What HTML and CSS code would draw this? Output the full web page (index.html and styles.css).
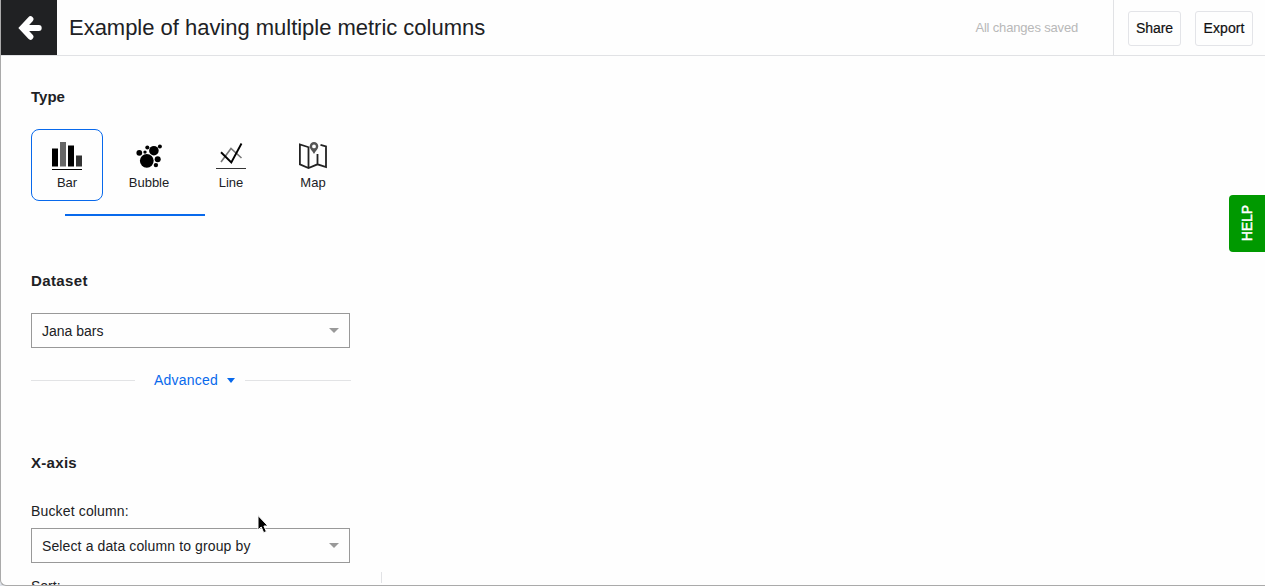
FILE: index.html
```html
<!DOCTYPE html>
<html lang="en">
<head>
<meta charset="utf-8">
<title>Chart editor</title>
<link rel="stylesheet" href="styles.css">
</head>
<body>
<div class="window">
  <header class="topbar">
    <button class="back" aria-label="Back">
      <svg width="24" height="26" viewBox="0 0 24 26" fill="none" stroke="#fff" stroke-width="5.800" stroke-linecap="round" stroke-linejoin="miter"><path d="M12.500 4.200L4.300 13L12.500 21.800"/><path d="M6 13H20.800"/></svg>
    </button>
    <h1 class="title">Example of having multiple metric columns</h1>
    <span class="status">All changes saved</span>
    <div class="actions">
      <button class="action share">Share</button>
      <button class="action export">Export</button>
    </div>
  </header>
  <main class="panel">
    <section class="type">
      <h2 class="heading">Type</h2>
      <div class="types">
        <button class="tile selected">
          <svg class="icon" width="30" height="30" viewBox="0 0 30 30"><path fill="#000" d="M0 6.500h6v18H0zM16 3.500h6v21h-6zM0 27h30v1H0z"/><path fill="#666" d="M8 0h6v24.500H8z"/><path fill="#333" d="M24 13.500h6v11h-6z"/></svg>
          <span>Bar</span>
        </button>
        <button class="tile">
          <svg class="icon" width="30" height="30" viewBox="0 0 30 30"><circle cx="12.800" cy="18.800" r="6.900"/><circle cx="19.900" cy="8.700" r="4.800"/><circle cx="5.300" cy="10.800" r="2.900"/><circle cx="13.300" cy="5.400" r="2"/><circle cx="11" cy="10.100" r="1.700"/><circle cx="25.900" cy="4.400" r="2"/><circle cx="23.700" cy="17.200" r="3"/><circle cx="21.900" cy="23.100" r="2.200"/></svg>
          <span>Bubble</span>
        </button>
        <button class="tile">
          <svg class="icon" width="30" height="30" viewBox="0 0 30 30" fill="none"><path stroke="#777" stroke-width="1.600" d="M5 20L15 6.500L25.500 16"/><path stroke="#000" stroke-width="1.900" d="M5 10.300L15.300 20.500L25.500 1.500"/><path stroke="#333" d="M0 26.500H30"/></svg>
          <span>Line</span>
        </button>
        <button class="tile">
          <svg class="icon" width="30" height="30" viewBox="0 0 30 30" fill="none"><path stroke="#222" stroke-width="1.800" d="M11.500 5.500L1.900 2.500V22.300L10.500 26L19.500 22.300L28 25V4.500L22.500 2.800M10.500 5.500V26M19.500 12V22.300"/><path fill="#555" fill-rule="evenodd" d="M16 0a4.300 4.300 0 0 1 4.300 4.300c0 2.700-2.600 4.500-4.300 7.700c-1.700-3.200-4.300-5-4.300-7.700A4.300 4.300 0 0 1 16 0zm0 2.500a1.900 1.900 0 1 0 0 3.800a1.900 1.900 0 0 0 0-3.800z"/></svg>
          <span>Map</span>
        </button>
      </div>
      <div class="scroll-thumb"></div>
    </section>
    <section class="dataset">
      <h2 class="heading">Dataset</h2>
      <div class="select"><span>Jana bars</span><i class="caret"></i></div>
      <div class="advanced"><span class="advanced-label">Advanced</span><i class="caret small"></i></div>
    </section>
    <section class="axis">
      <h2 class="heading">X-axis</h2>
      <label class="label bucket"><span>Bucket column:</span></label>
      <div class="select"><span class="choice">Select a data column to group by</span><i class="caret"></i></div>
      <label class="label sort"><span>Sort:</span></label>
    </section>
  </main>
  <div class="divider-end"></div>
  <aside class="help"><span>HELP</span></aside>
  <svg class="pointer" width="14" height="20" viewBox="0 0 14 20"><path fill="#000" stroke="#fff" d="M2 0.500V15L5.200 12L7.700 17.700L10.400 16.500L7.900 11H12Z"/></svg>
</div>
</body>
</html>
```
FILE: styles.css
```css
* { box-sizing: border-box; }
html { background: #dfe3ea; }
body { margin: 0; font-family: "Liberation Sans", Arial, sans-serif; font-size: 14px; color: #202124; }
button { font: inherit; color: inherit; padding: 0; background: none; border: 0; }
h1, h2 { margin: 0; }
svg { display: block; }
.window { position: relative; height: 586px; overflow: hidden; background: #fefefe; border: solid #aaa; border-width: 0 0 1px 1px; border-bottom-left-radius: 6px; }
.topbar { display: flex; height: 56px; border-bottom: 1px solid #e1e2e5; }
.back { display: flex; align-items: center; width: 56px; height: 55px; padding-left: 17px; background: #202123; }
.title { margin-left: 12px; font-size: 22px; font-weight: 400; line-height: 55px; letter-spacing: -0.02px; white-space: nowrap; }
.status { margin-left: auto; margin-right: 35px; font-size: 13px; line-height: 55px; letter-spacing: -0.17px; color: #b8b8b8; }
.actions { display: flex; align-items: center; gap: 14px; width: 152px; padding-left: 14px; padding-top: 1px; border-left: 1px solid #e1e2e5; }
.action { height: 35px; border: 1px solid #e3e4e8; border-radius: 3px; color: #111; -webkit-text-stroke: 0.2px #111; }
.share { width: 53px; letter-spacing: -0.1px; }
.export { width: 58px; letter-spacing: 0.1px; }
.panel { width: 350px; padding-left: 30px; }
.heading { font-size: 15px; line-height: 18px; font-weight: 700; }
.dataset .heading { letter-spacing: 0.38px; }
.axis .heading { letter-spacing: 0.3px; }
.type { height: 216px; padding-top: 32px; }
.types { display: flex; gap: 10px; margin-top: 23px; }
.tile { display: flex; flex-direction: column; align-items: center; flex: none; width: 72px; height: 72px; padding-top: 12px; border: 1px solid transparent; border-radius: 8px; font-size: 13px; line-height: 16px; }
.tile span { margin-top: 3px; }
.selected { border-color: #0869ec; }
.scroll-thumb { width: 140px; height: 2px; margin: 13px 0 0 34px; background: #0869ec; }
.dataset { height: 182px; }
.select { display: flex; align-items: center; justify-content: space-between; width: 319px; height: 35px; padding: 0 10px; border: 1px solid #999; }
.choice { letter-spacing: 0.12px; }
.dataset .select { margin-top: 23px; }
.caret { width: 0; border: solid transparent; border-width: 5px 5px 0; border-top-color: #999; }
.small { border-width: 5px 4.5px 0; border-top-color: #0869ec; margin-left: 9px; margin-right: 10px; }
.advanced { display: flex; align-items: center; width: 320px; height: 20px; margin-top: 22px; color: #0869ec; }
.advanced-label { letter-spacing: 0.2px; }
.advanced::before, .advanced::after { content: ""; height: 1px; background: #e2e3e5; }
.advanced::before { width: 104px; margin-right: 19px; }
.advanced::after { flex: 1; }
.label { display: block; line-height: 16px; }
.bucket { margin: 31px 0 9px; letter-spacing: 0.15px; }
.sort { margin-top: 15px; }
.divider-end { position: absolute; left: 380px; bottom: 2px; width: 1px; height: 11px; background: #e1e2e5; }
.help { position: absolute; right: 0; top: 195px; display: flex; align-items: center; justify-content: center; width: 36px; height: 57px; padding-right: 1px; border-radius: 4px 0 0 4px; background: #090; color: #fff; }
.help span { writing-mode: vertical-rl; transform: rotate(180deg); font-size: 14px; font-weight: 400; letter-spacing: -0.1px; -webkit-text-stroke: 0.45px #fff; }
.pointer { position: absolute; left: 255px; top: 515px; }
```
